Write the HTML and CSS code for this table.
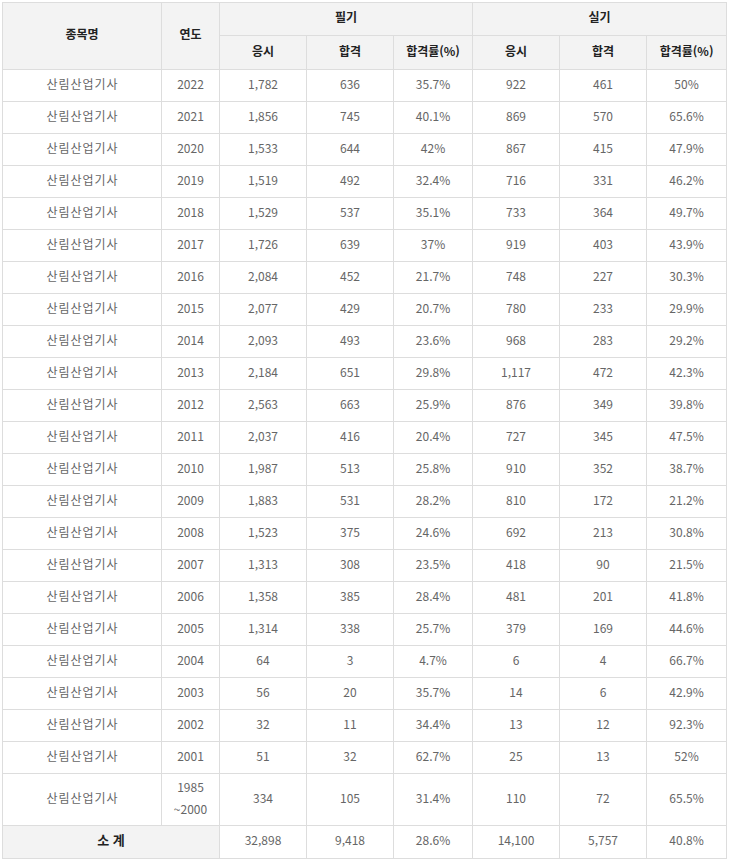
FILE: index.html
```
<!DOCTYPE html>
<html lang="ko">
<head>
<meta charset="utf-8">
<link rel="stylesheet" href="styles.css">
</head>
<body>
<table class="stats">
<colgroup>
<col class="c-name"><col class="c-year"><col class="c-n"><col class="c-n"><col class="c-r"><col class="c-n"><col class="c-n"><col class="c-r2">
</colgroup>
<thead>
<tr class="h1"><th rowspan="2">종목명</th><th rowspan="2">연도</th><th colspan="3">필기</th><th colspan="3">실기</th></tr>
<tr class="h2"><th>응시</th><th>합격</th><th>합격률(%)</th><th>응시</th><th>합격</th><th>합격률(%)</th></tr>
</thead>
<tbody>
<tr><td>산림산업기사</td><td>2022</td><td>1,782</td><td>636</td><td>35.7%</td><td>922</td><td>461</td><td>50%</td></tr>
<tr><td>산림산업기사</td><td>2021</td><td>1,856</td><td>745</td><td>40.1%</td><td>869</td><td>570</td><td>65.6%</td></tr>
<tr><td>산림산업기사</td><td>2020</td><td>1,533</td><td>644</td><td>42%</td><td>867</td><td>415</td><td>47.9%</td></tr>
<tr><td>산림산업기사</td><td>2019</td><td>1,519</td><td>492</td><td>32.4%</td><td>716</td><td>331</td><td>46.2%</td></tr>
<tr><td>산림산업기사</td><td>2018</td><td>1,529</td><td>537</td><td>35.1%</td><td>733</td><td>364</td><td>49.7%</td></tr>
<tr><td>산림산업기사</td><td>2017</td><td>1,726</td><td>639</td><td>37%</td><td>919</td><td>403</td><td>43.9%</td></tr>
<tr><td>산림산업기사</td><td>2016</td><td>2,084</td><td>452</td><td>21.7%</td><td>748</td><td>227</td><td>30.3%</td></tr>
<tr><td>산림산업기사</td><td>2015</td><td>2,077</td><td>429</td><td>20.7%</td><td>780</td><td>233</td><td>29.9%</td></tr>
<tr><td>산림산업기사</td><td>2014</td><td>2,093</td><td>493</td><td>23.6%</td><td>968</td><td>283</td><td>29.2%</td></tr>
<tr><td>산림산업기사</td><td>2013</td><td>2,184</td><td>651</td><td>29.8%</td><td>1,117</td><td>472</td><td>42.3%</td></tr>
<tr><td>산림산업기사</td><td>2012</td><td>2,563</td><td>663</td><td>25.9%</td><td>876</td><td>349</td><td>39.8%</td></tr>
<tr><td>산림산업기사</td><td>2011</td><td>2,037</td><td>416</td><td>20.4%</td><td>727</td><td>345</td><td>47.5%</td></tr>
<tr><td>산림산업기사</td><td>2010</td><td>1,987</td><td>513</td><td>25.8%</td><td>910</td><td>352</td><td>38.7%</td></tr>
<tr><td>산림산업기사</td><td>2009</td><td>1,883</td><td>531</td><td>28.2%</td><td>810</td><td>172</td><td>21.2%</td></tr>
<tr><td>산림산업기사</td><td>2008</td><td>1,523</td><td>375</td><td>24.6%</td><td>692</td><td>213</td><td>30.8%</td></tr>
<tr><td>산림산업기사</td><td>2007</td><td>1,313</td><td>308</td><td>23.5%</td><td>418</td><td>90</td><td>21.5%</td></tr>
<tr><td>산림산업기사</td><td>2006</td><td>1,358</td><td>385</td><td>28.4%</td><td>481</td><td>201</td><td>41.8%</td></tr>
<tr><td>산림산업기사</td><td>2005</td><td>1,314</td><td>338</td><td>25.7%</td><td>379</td><td>169</td><td>44.6%</td></tr>
<tr><td>산림산업기사</td><td>2004</td><td>64</td><td>3</td><td>4.7%</td><td>6</td><td>4</td><td>66.7%</td></tr>
<tr><td>산림산업기사</td><td>2003</td><td>56</td><td>20</td><td>35.7%</td><td>14</td><td>6</td><td>42.9%</td></tr>
<tr><td>산림산업기사</td><td>2002</td><td>32</td><td>11</td><td>34.4%</td><td>13</td><td>12</td><td>92.3%</td></tr>
<tr><td>산림산업기사</td><td>2001</td><td>51</td><td>32</td><td>62.7%</td><td>25</td><td>13</td><td>52%</td></tr>
<tr class="tall"><td>산림산업기사</td><td>1985<br>~2000</td><td>334</td><td>105</td><td>31.4%</td><td>110</td><td>72</td><td>65.5%</td></tr>
</tbody>
<tfoot>
<tr class="total"><th colspan="2">소 계</th><td>32,898</td><td>9,418</td><td>28.6%</td><td>14,100</td><td>5,757</td><td>40.8%</td></tr>
</tfoot>
</table>
</body>
</html>
```
FILE: styles.css
```
html, body {
  margin: 0;
  padding: 0;
  background: #fff;
}
body {
  padding: 2px;
  font-family: "Noto Sans CJK KR", "Noto Sans", sans-serif;
}
.stats {
  border-collapse: collapse;
  table-layout: fixed;
  width: 725px;
  font-size: 12px;
  color: #666;
}
.c-name { width: 159px; }
.c-year { width: 58px; }
.c-n { width: 87px; }
.c-r { width: 79px; }
.c-r2 { width: 80px; }
.stats th, .stats td {
  border: 1px solid #ddd;
  text-align: center;
  padding: 0 0 4px 0;
  line-height: 16px;
}
.stats th {
  background: #f3f3f3;
  color: #222;
  font-weight: 700;
  font-size: 12px;
}
.stats td {
  height: 27px;
}
.stats tbody td:first-child {
  letter-spacing: 1px;
  text-indent: 1px;
}
.h1 th { height: 28px; }
.h2 th { height: 29px; }
.tall td { height: 47px; line-height: 22px; }
.total th, .total td { height: 28px; }
.total th { font-size: 13px; }
```
